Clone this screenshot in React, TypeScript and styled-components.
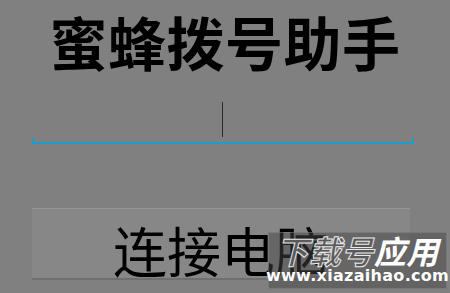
import React from "react";
import styled, { createGlobalStyle } from "styled-components";

const Global = createGlobalStyle`
  html, body { margin: 0; padding: 0; background: #808080; }
  body { width: 450px; height: 293px; overflow: hidden; }
`;

const Screen = styled.div`
  position: relative;
  width: 450px;
  height: 293px;
  background: #808080;
  display: flex;
  flex-direction: column;
  font-family: "Noto Sans CJK SC", "Noto Sans", sans-serif;
`;

const Title = styled.h1`
  margin: 12px 0 0 0;
  height: 58px;
  font-size: 58px;
  line-height: 58px;
  font-weight: 700;
  color: #000;
  text-align: center;
  letter-spacing: 0.5px;
`;

const InputField = styled.div`
  margin: 32px 0 0 32px;
  width: 382px;
  display: flex;
  flex-direction: column;
  align-items: center;
`;

const Cursor = styled.div`
  width: 1px;
  height: 35px;
  background: #2b2b2b;
  margin-left: -2px;
`;

const Underline = styled.div`
  margin-top: 1px;
  align-self: stretch;
  height: 4px;
  border: 2px solid #1f9bcf;
  border-top: none;
`;

const Button = styled.div`
  margin: 64px 0 0 32px;
  width: 378px;
  height: 72px;
  box-sizing: border-box;
  background: #878787;
  border-top: 1px solid #959595;
  border-bottom: 2px solid #6f6f6f;
  display: flex;
  justify-content: center;
  align-items: flex-start;
  font-size: 54px;
  line-height: 64px;
  padding-top: 9px;
  color: #000;
  font-weight: 400;
`;

const Watermark = styled.div`
  position: absolute;
  left: 268px;
  top: 232px;
  width: 179px;
  height: 57px;
  box-sizing: border-box;
  background: rgba(70, 70, 70, 0.5);
  border: 1px solid rgba(160, 160, 160, 0.35);
  display: flex;
  flex-direction: column;
  align-items: center;
`;

const MarkBrand = styled.div`
  font-size: 32px;
  line-height: 32px;
  font-weight: 700;
  font-style: italic;
  letter-spacing: 0.5px;
  margin-top: 1px;
  white-space: nowrap;
`;

const Outlined = styled.span`
  color: #5a5a5a;
  -webkit-text-stroke: 1px #e8e8e8;
`;

const Solid = styled.span`
  color: #fff;
`;

const MarkUrl = styled.div`
  font-family: "DejaVu Sans", sans-serif;
  font-weight: 700;
  font-size: 16px;
  line-height: 20px;
  color: #fff;
  white-space: nowrap;
  letter-spacing: 0.3px;
`;

export default function App() {
  return (
    <>
      <Global />
      <Screen>
        <Title>蜜蜂拨号助手</Title>
        <InputField>
          <Cursor />
          <Underline />
        </InputField>
        <Button>连接电脑</Button>
        <Watermark>
          <MarkBrand>
            <Outlined>下载号</Outlined>
            <Solid>应用</Solid>
          </MarkBrand>
          <MarkUrl>www.xiazaihao.com</MarkUrl>
        </Watermark>
      </Screen>
    </>
  );
}
